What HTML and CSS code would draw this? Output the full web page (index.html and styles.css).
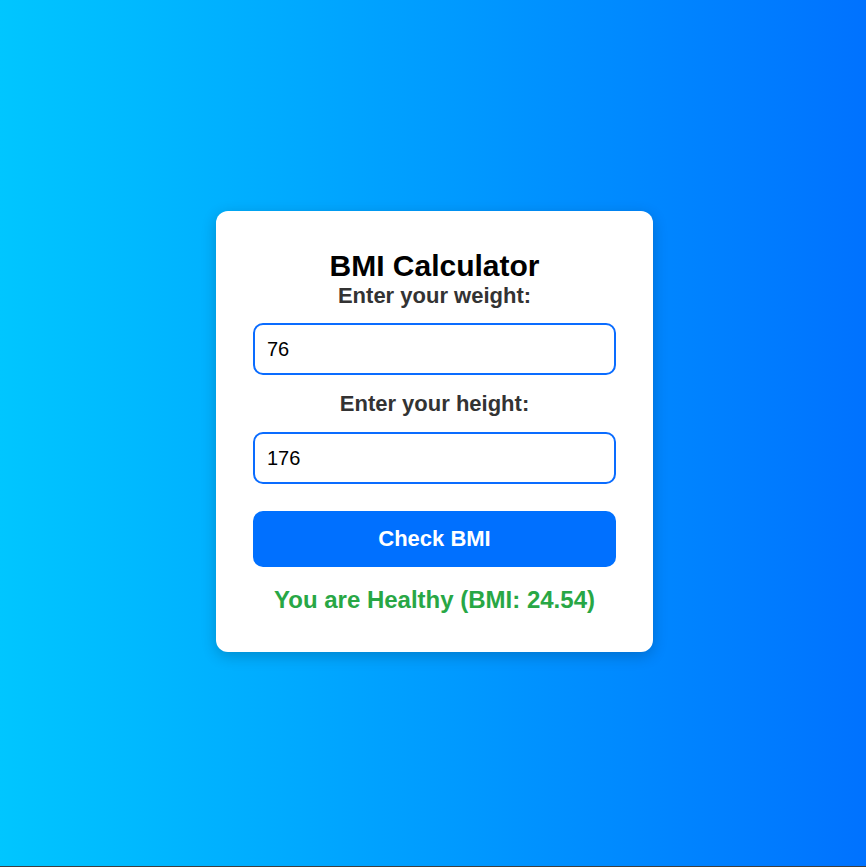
FILE: index.html
```html
<!DOCTYPE html>
<html lang="en">
<head>
<meta charset="UTF-8">
<title>BMI Calculator</title>
<link rel="stylesheet" href="styles.css">
</head>
<body>
<main class="card">
  <h2 class="title">BMI Calculator</h2>
  <label class="label" for="weight">Enter your weight:</label>
  <input class="field field-first" id="weight" type="text" value="76">
  <label class="label" for="height">Enter your height:</label>
  <input class="field" id="height" type="text" value="176">
  <button class="btn" type="button">Check BMI</button>
  <p class="result">You are Healthy (BMI: 24.54)</p>
</main>
</body>
</html>
```

FILE: styles.css
```css
html {
  background: #3c4043;
  height: 867px;
}
body {
  margin: 0;
  height: 866px;
  background: linear-gradient(to right, #00c6ff, #0072ff);
  font-family: "Liberation Sans", Arial, sans-serif;
  display: flex;
  align-items: center;
  justify-content: center;
}
.card {
  box-sizing: border-box;
  width: 437px;
  padding: 38px 37px 38px;
  background: #fff;
  border-radius: 12px;
  box-shadow: 0 4px 15px rgba(0, 0, 0, 0.2);
  display: flex;
  flex-direction: column;
  text-align: center;
  margin: 0 0 3px 3px;
}
.title {
  margin: 0;
  font-size: 30px;
  line-height: 34px;
  font-weight: bold;
  color: #000;
}
.label {
  display: block;
  font-size: 22px;
  line-height: 25px;
  font-weight: bold;
  color: #333;
}
.field {
  box-sizing: border-box;
  width: 100%;
  height: 52px;
  margin: 16px 0;
  padding: 0 12px;
  border: 2px solid #0a6cff;
  border-radius: 10px;
  font-family: "Liberation Sans", Arial, sans-serif;
  font-size: 20px;
  color: #000;
  outline: none;
}
.field-first {
  margin-top: 15px;
}
.btn {
  height: 56px;
  margin-top: 11px;
  border: none;
  border-radius: 10px;
  background: #0070ff;
  color: #fff;
  font-family: "Liberation Sans", Arial, sans-serif;
  font-size: 22px;
  font-weight: bold;
}
.result {
  margin: 19px 0 0;
  font-size: 24px;
  line-height: 28px;
  font-weight: bold;
  color: #28a745;
}
```
